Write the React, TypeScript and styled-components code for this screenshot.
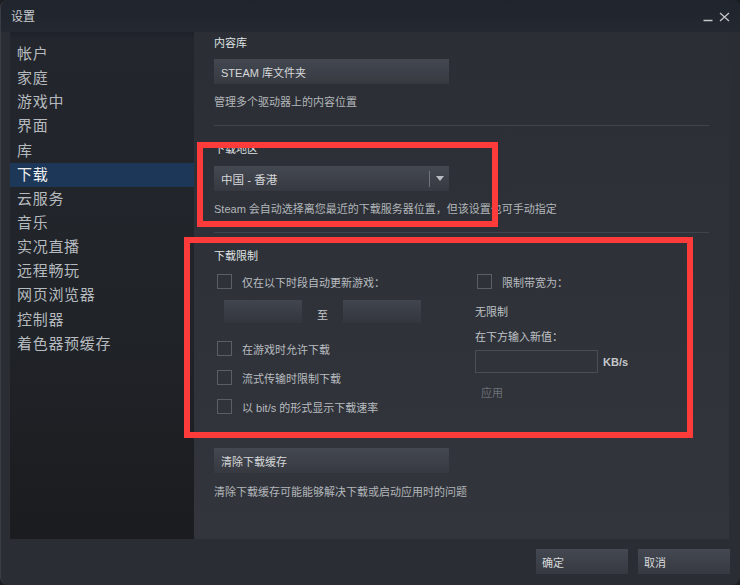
import React, { useState } from 'react'
import styled, { createGlobalStyle } from 'styled-components'

const GlobalStyle = createGlobalStyle`
    html, body {
        margin: 0;
        padding: 0;
        background: #1c1e22;
        font-family: "Liberation Sans", "Noto Sans CJK SC", sans-serif;
    }
    * { box-sizing: border-box; }
`

const menu = ['帐户', '家庭', '游戏中', '界面', '库', '下载', '云服务', '音乐', '实况直播', '远程畅玩', '网页浏览器', '控制器', '着色器预缓存']

const App = () => {
    const [active, setActive] = useState(5)
    const [checks, setChecks] = useState<Record<string, boolean>>({})

    const toggle = (key: string) => setChecks((c) => ({ ...c, [key]: !c[key] }))

    return (
        <>
            <GlobalStyle />
            <Window>
                <TitleBar>
                    <Title>设置</Title>
                    <WinButtons>
                        <svg width="10" height="10" viewBox="0 0 10 10">
                            <line x1="0.5" y1="8.5" x2="9.5" y2="8.5" stroke="#c3c5c8" strokeWidth="1.3" />
                        </svg>
                        <svg width="11" height="10" viewBox="0 0 11 10">
                            <path d="M1 1 L10 9 M10 1 L1 9" stroke="#c3c5c8" strokeWidth="1.3" fill="none" />
                        </svg>
                    </WinButtons>
                </TitleBar>

                <Body>
                    <Sidebar>
                        {menu.map((item, i) => (
                            <MenuItem key={item} $active={i === active} onClick={() => setActive(i)}>
                                {item}
                            </MenuItem>
                        ))}
                    </Sidebar>

                    <Content>
                        <Label $top={3}>内容库</Label>
                        <WideButton $top={8}>STEAM 库文件夹</WideButton>
                        <Desc $top={10}>管理多个驱动器上的内容位置</Desc>
                        <Divider $top={15} />

                        <Label $top={15}>下载地区</Label>
                        <Dropdown $top={9}>
                            <span>中国 - 香港</span>
                            <DropArrow>
                                <svg width="8" height="5" viewBox="0 0 8 5">
                                    <path d="M0 0 L8 0 L4 5 Z" fill="#b9bdc1" />
                                </svg>
                            </DropArrow>
                        </Dropdown>
                        <Desc $top={10}>Steam 会自动选择离您最近的下载服务器位置，但该设置也可手动指定</Desc>
                        <Divider $top={15} />

                        <Label $top={15}>下载限制</Label>
                        <LimitGrid>
                            <Column>
                                <CheckRow $top={0} onClick={() => toggle('schedule')}>
                                    <Box $checked={!!checks.schedule} />
                                    仅在以下时段自动更新游戏：
                                </CheckRow>
                                <TimeRow>
                                    <TimeInput />
                                    <span>至</span>
                                    <TimeInput />
                                </TimeRow>
                                <CheckRow $top={18} onClick={() => toggle('ingame')}>
                                    <Box $checked={!!checks.ingame} />
                                    在游戏时允许下载
                                </CheckRow>
                                <CheckRow $top={14} onClick={() => toggle('stream')}>
                                    <Box $checked={!!checks.stream} />
                                    流式传输时限制下载
                                </CheckRow>
                                <CheckRow $top={14} onClick={() => toggle('bits')}>
                                    <Box $checked={!!checks.bits} />
                                    以 bit/s 的形式显示下载速率
                                </CheckRow>
                            </Column>
                            <Column>
                                <CheckRow $top={0} $indent={2} onClick={() => toggle('limit')}>
                                    <Box $checked={!!checks.limit} />
                                    限制带宽为：
                                </CheckRow>
                                <Plain $top={15}>无限制</Plain>
                                <Plain $top={9}>在下方输入新值：</Plain>
                                <RateRow>
                                    <RateInput />
                                    <Unit>KB/s</Unit>
                                </RateRow>
                                <ApplyButton>应用</ApplyButton>
                            </Column>
                        </LimitGrid>

                        <WideButton $top={34}>清除下载缓存</WideButton>
                        <Desc $top={11}>清除下载缓存可能能够解决下载或启动应用时的问题</Desc>
                    </Content>
                </Body>

                <Footer>
                    <FooterButton>确定</FooterButton>
                    <FooterButton>取消</FooterButton>
                </Footer>

                <Highlight $left={196} $top={142} $w={301} $h={85} />
                <Highlight $left={183} $top={237} $w={509} $h={201} />
            </Window>
        </>
    )
}

const Window = styled.div`
    position: relative;
    width: 740px;
    height: 585px;
    display: flex;
    flex-direction: column;
    background: #2a2d33;
    border-radius: 8px;
    border-left: 1px solid #3a3d43;
    overflow: hidden;
`

const TitleBar = styled.div`
    height: 32px;
    flex-shrink: 0;
    display: flex;
    align-items: center;
    justify-content: space-between;
    padding: 0 10px 0 10px;
    background: linear-gradient(to bottom, #1f242d, #242830);
`

const Title = styled.div`
    font-size: 12px;
    color: #c9cbce;
    margin-top: -2px;
`

const WinButtons = styled.div`
    display: flex;
    align-items: center;
    gap: 6px;
    padding-top: 2px;
`

const Body = styled.div`
    height: 507px;
    flex-shrink: 0;
    display: flex;
    padding-left: 9px;
    padding-right: 11px;
`

const Sidebar = styled.div`
    width: 184px;
    flex-shrink: 0;
    padding-top: 10px;
    background: linear-gradient(to bottom, #1d2129 0px, #23262c 7px, #202328 300px, #1a1c1f 100%);
`

const MenuItem = styled.div<{ $active: boolean }>`
    height: 24.15px;
    line-height: 24px;
    padding-left: 7px;
    font-size: 15px;
    letter-spacing: 0.7px;
    color: ${(p) => (p.$active ? '#eef0f2' : '#b5babe')};
    background: ${(p) => (p.$active ? '#1c3757' : 'transparent')};
    cursor: pointer;
`

const Content = styled.div`
    flex: 1;
    display: flex;
    flex-direction: column;
    align-items: flex-start;
    padding: 0 20px 0 20px;
    background: linear-gradient(to bottom, #2b2e34, #32353b);
`

const Label = styled.div<{ $top: number }>`
    margin-top: ${(p) => p.$top}px;
    font-size: 11px;
    line-height: 16px;
    color: #dfe1e3;
`

const Desc = styled.div<{ $top: number }>`
    margin-top: ${(p) => p.$top}px;
    font-size: 11px;
    line-height: 16px;
    color: #b2b6ba;
    white-space: nowrap;
`

const Divider = styled.div<{ $top: number }>`
    margin-top: ${(p) => p.$top}px;
    align-self: stretch;
    height: 1px;
    background: #3f444b;
`

const WideButton = styled.div<{ $top: number }>`
    margin-top: ${(p) => p.$top}px;
    width: 235px;
    height: 25px;
    display: flex;
    align-items: center;
    padding-left: 7px;
    font-size: 11px;
    color: #d6d8da;
    background: linear-gradient(to bottom, #444851, #363940);
`

const Dropdown = styled(WideButton)`
    justify-content: space-between;
    padding-right: 0;
    font-size: 11.5px;
`

const DropArrow = styled.div`
    width: 20px;
    height: 16px;
    display: flex;
    align-items: center;
    justify-content: center;
    border-left: 1px solid #70747a;
`

const LimitGrid = styled.div`
    margin-top: 10px;
    display: grid;
    grid-template-columns: 261px 1fr;
`

const Column = styled.div`
    display: flex;
    flex-direction: column;
    align-items: flex-start;
`

const CheckRow = styled.div<{ $top: number; $indent?: number }>`
    margin-top: ${(p) => p.$top}px;
    padding-left: ${(p) => p.$indent ?? 3}px;
    display: flex;
    align-items: center;
    gap: 10px;
    height: 15px;
    font-size: 11px;
    color: #b8bcc0;
    cursor: pointer;
    white-space: nowrap;
`

const Box = styled.div<{ $checked: boolean }>`
    width: 15px;
    height: 15px;
    border: 1px solid #5b5e64;
    background: ${(p) => (p.$checked ? '#1a9fff' : 'transparent')};
`

const TimeRow = styled.div`
    margin-top: 11px;
    padding-left: 10px;
    display: flex;
    align-items: center;
    font-size: 11px;
    color: #c4c7ca;
    span {
        width: 41px;
        text-align: center;
        padding-top: 4px;
    }
`

const TimeInput = styled.div`
    width: 78px;
    height: 23px;
    background: linear-gradient(to bottom, #41454d, #33363d);
`

const Plain = styled.div<{ $top: number }>`
    margin-top: ${(p) => p.$top}px;
    font-size: 11px;
    line-height: 16px;
    color: #bfc2c6;
`

const RateRow = styled.div`
    margin-top: 5px;
    display: flex;
    align-items: center;
    gap: 5px;
`

const RateInput = styled.div`
    width: 123px;
    height: 23px;
    border: 1px solid #4a4e55;
    background: #30333a;
`

const Unit = styled.span`
    font-size: 11px;
    font-weight: bold;
    color: #c5c8cb;
`

const ApplyButton = styled.div`
    margin-top: 9px;
    width: 68px;
    height: 20px;
    display: flex;
    align-items: center;
    padding-left: 6px;
    font-size: 11px;
    color: #6c7076;
    background: #30333a;
`

const Footer = styled.div`
    flex: 1;
    display: flex;
    justify-content: flex-end;
    align-items: flex-start;
    gap: 10px;
    padding: 10px 10px 0 0;
`

const FooterButton = styled.div`
    width: 92px;
    height: 25px;
    display: flex;
    align-items: center;
    padding-left: 6px;
    font-size: 11px;
    color: #d6d8da;
    background: linear-gradient(to bottom, #444851, #363940);
`

const Highlight = styled.div<{ $left: number; $top: number; $w: number; $h: number }>`
    position: absolute;
    left: ${(p) => p.$left}px;
    top: ${(p) => p.$top}px;
    width: ${(p) => p.$w}px;
    height: ${(p) => p.$h}px;
    border: 6px solid #fd3b3b;
    pointer-events: none;
`

export default App
